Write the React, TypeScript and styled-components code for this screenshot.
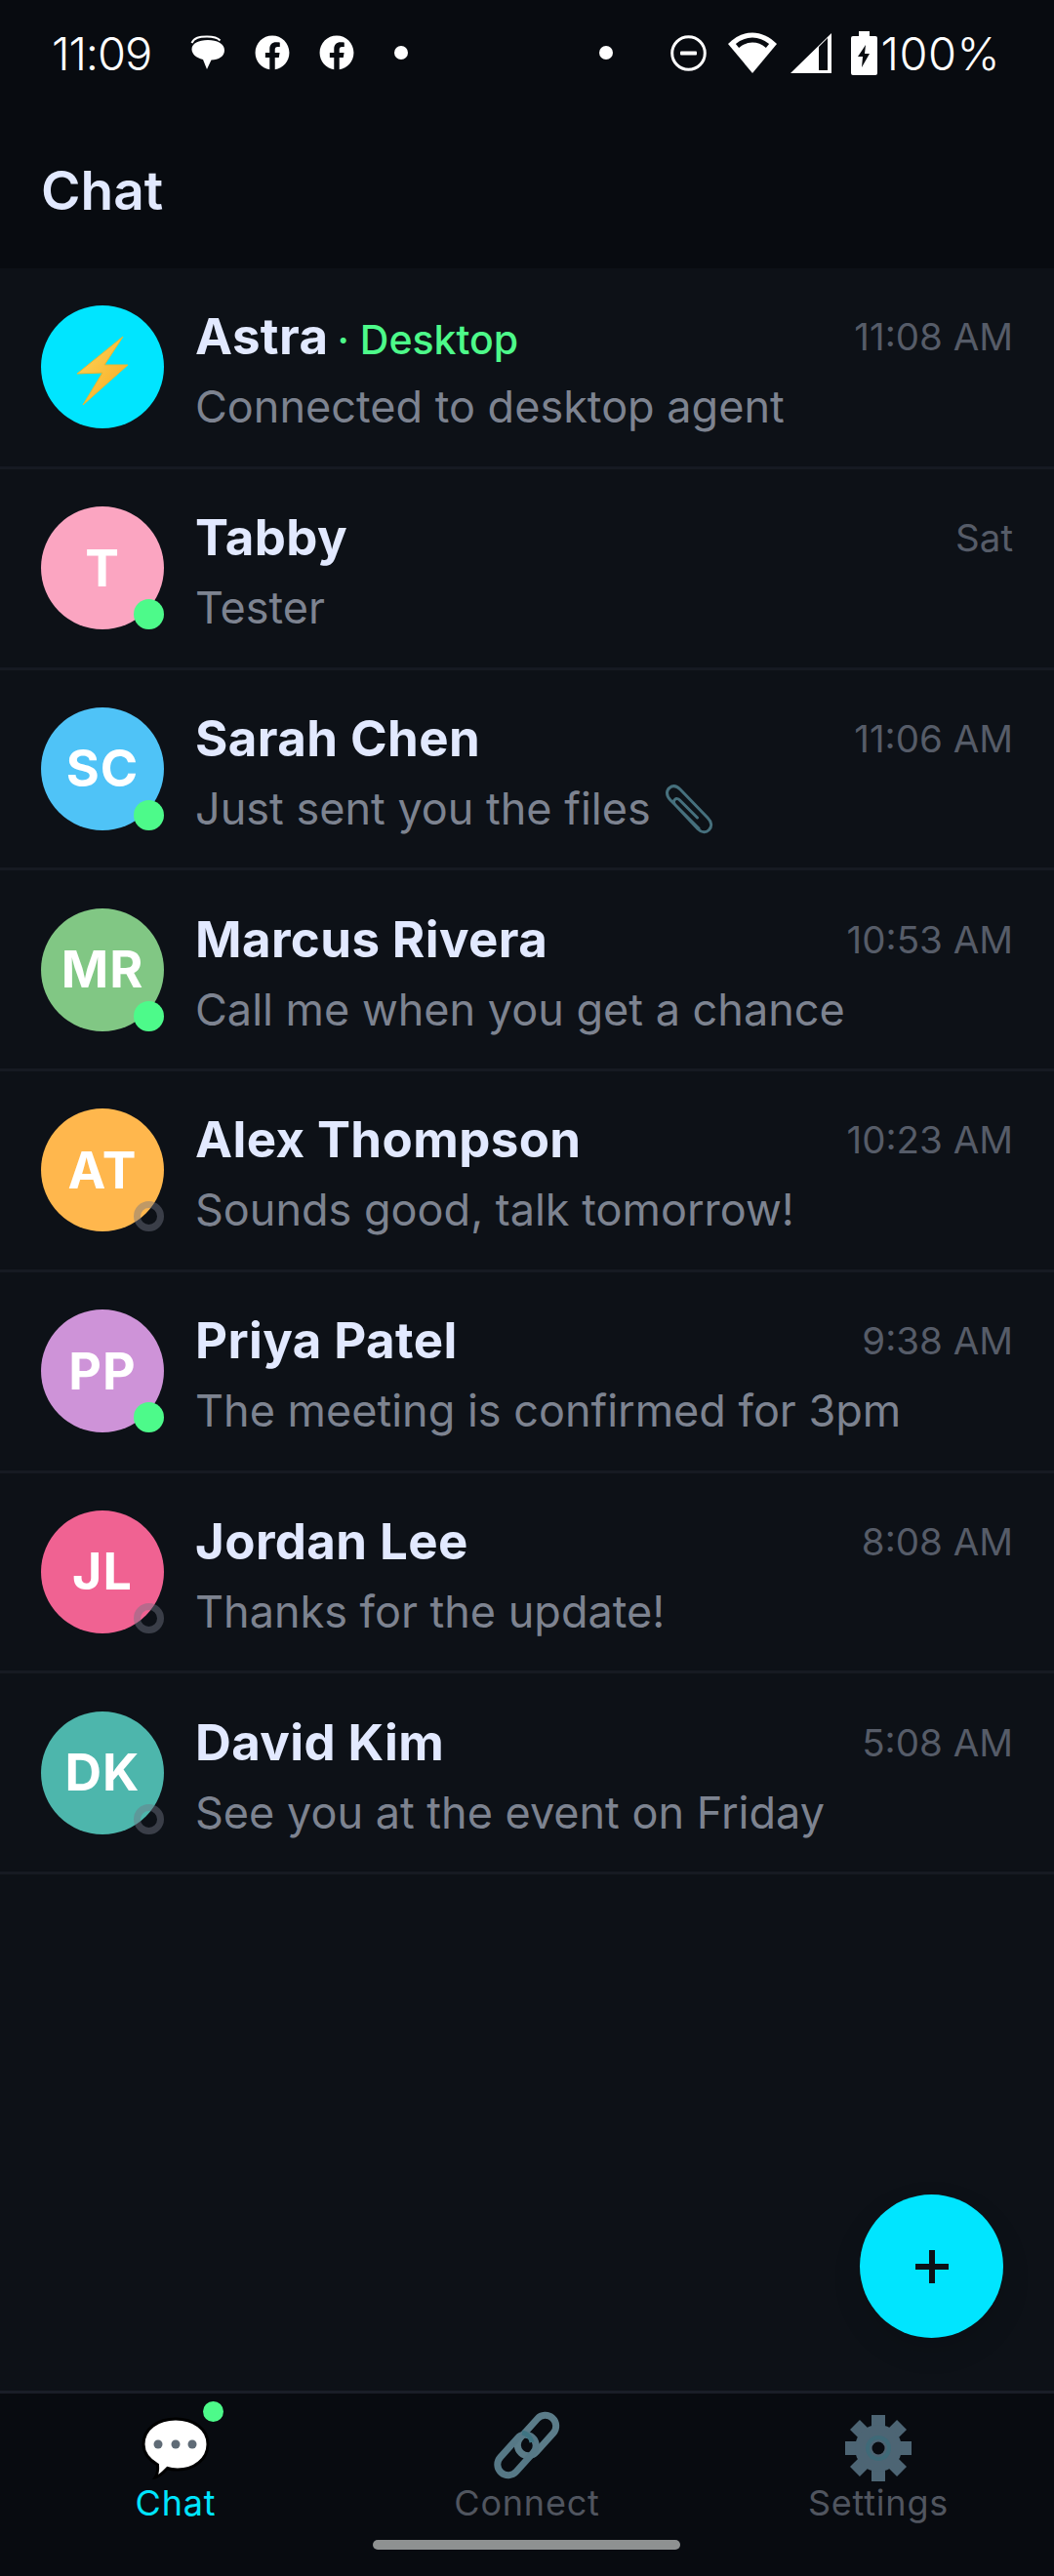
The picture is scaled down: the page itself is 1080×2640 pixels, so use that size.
import React from 'react';
import styled, { createGlobalStyle } from 'styled-components';
import { FaFacebook } from 'react-icons/fa';

const GlobalStyle = createGlobalStyle`
  html, body {
    margin: 0;
    padding: 0;
    background: #080b10;
  }
  * {
    box-sizing: border-box;
  }
`;

const fontStack = `Inter, 'Noto Sans', 'Liberation Sans', sans-serif`;

const Screen = styled.div`
  position: relative;
  width: 1080px;
  height: 2640px;
  display: flex;
  flex-direction: column;
  background: #0d1117;
  font-family: ${fontStack};
  overflow: hidden;
`;

const Top = styled.header`
  height: 275px;
  flex: none;
  background: #080b10;
  display: flex;
  flex-direction: column;
`;

const StatusBar = styled.div`
  height: 108px;
  padding: 0 55px 0 53px;
  display: flex;
  align-items: center;
  justify-content: space-between;
  color: #fff;
`;

const StatusGroup = styled.div`
  display: flex;
  align-items: center;
`;

const StatusText = styled.span<{ $spacing: number }>`
  font-size: 47px;
  font-weight: 300;
  letter-spacing: ${(p) => p.$spacing}px;
  line-height: 1;
`;

const StatusSlot = styled.span<{ $ml: number }>`
  display: flex;
  margin-left: ${(p) => p.$ml}px;
  color: #fff;
`;

const StatusDot = styled.span<{ $ml: number }>`
  width: 14px;
  height: 14px;
  border-radius: 50%;
  background: #fff;
  margin-left: ${(p) => p.$ml}px;
`;

const Title = styled.h1`
  margin: 0;
  padding: 56px 0 0 42px;
  font-size: 55px;
  line-height: 62px;
  font-weight: 600;
  color: #e2e9ff;
`;

const List = styled.main`
  flex: 1;
`;

const Row = styled.div`
  height: 205.75px;
  padding: 0 42px;
  display: flex;
  align-items: center;
  gap: 32px;
  border-bottom: 3px solid #161a22;
`;

const Avatar = styled.div<{ $color: string }>`
  position: relative;
  width: 126px;
  height: 126px;
  flex: none;
  border-radius: 50%;
  background: ${(p) => p.$color};
  color: #fff;
  display: flex;
  align-items: center;
  justify-content: center;
  font-size: 52px;
  font-weight: 700;
  letter-spacing: 1px;
`;

const Presence = styled.span<{ $online: boolean }>`
  position: absolute;
  right: 0;
  bottom: 0;
  width: 31px;
  height: 31px;
  border-radius: 50%;
  background: ${(p) => (p.$online ? '#4dfa8a' : 'transparent')};
  border: ${(p) => (p.$online ? 'none' : '7px solid rgba(112, 118, 134, 0.45)')};
`;

const RowBody = styled.div`
  flex: 1;
  min-width: 0;
  display: flex;
  flex-direction: column;
  gap: 10px;
  margin-top: 10px;
`;

const RowTop = styled.div`
  display: flex;
  justify-content: space-between;
  align-items: flex-start;
`;

const NameGroup = styled.div`
  display: flex;
  align-items: baseline;
`;

const Name = styled.span`
  font-size: 51px;
  line-height: 62px;
  font-weight: 700;
  letter-spacing: 0.4px;
  color: #e2e9ff;
`;

const Agent = styled.span`
  margin-left: 9px;
  font-size: 41px;
  font-weight: 500;
  color: #4dfa8a;
`;

const Time = styled.span`
  font-size: 38.5px;
  line-height: 62px;
  font-weight: 400;
  color: #565c68;
`;

const Preview = styled.div`
  font-size: 45px;
  line-height: 62px;
  font-weight: 400;
  color: #7d8390;
  white-space: nowrap;
`;

const ClipIcon = styled.svg`
  vertical-align: -12px;
  margin-left: 12px;
`;

const Fab = styled.button`
  position: absolute;
  left: 881px;
  top: 2249px;
  width: 147px;
  height: 147px;
  padding: 0;
  border: none;
  border-radius: 50%;
  background: #00e5ff;
  box-shadow: 0 12px 30px rgba(0, 0, 0, 0.12);
  display: flex;
  align-items: center;
  justify-content: center;
  color: #0d1117;
`;

const Nav = styled.nav`
  height: 190px;
  flex: none;
  background: #080b10;
  border-top: 3px solid #1a1e28;
  display: grid;
  grid-template-columns: repeat(3, 1fr);
`;

const NavItem = styled.div<{ $active?: boolean }>`
  position: relative;
  display: flex;
  flex-direction: column;
  align-items: center;
  padding-top: 23px;
  color: ${(p) => (p.$active ? '#00e5ff' : '#50555f')};
  font-size: 36px;
  letter-spacing: 0.8px;
  line-height: 44px;
`;

const NavIcon = styled.svg`
  display: block;
  margin-bottom: 1px;
  overflow: visible;
`;

const NavBadge = styled.span`
  position: absolute;
  left: 208px;
  top: 8px;
  width: 21px;
  height: 21px;
  border-radius: 50%;
  background: #4dfa8a;
`;

const HomeBar = styled.div`
  position: absolute;
  left: 382px;
  bottom: 27px;
  width: 315px;
  height: 10px;
  border-radius: 5px;
  background: #8e9191;
`;

const BubbleGlyph = () => (
  <svg width="36" height="36" viewBox="0 0 36 36" fill="none">
    <path d="M1.5 8C4 2.500 9 1.500 17 1.500s11 1 13.500 4" stroke="#fff" strokeWidth="2" />
    <path
      d="M18 5c9.500 0 17 3.600 17 10.500 0 6.500-6 9.800-13.500 10L17 35l-4-10C6 23.500 1.500 19 1.500 14.500 1.500 8.500 8.500 5 18 5z"
      fill="#fff"
    />
  </svg>
);

const DndGlyph = () => (
  <svg width="37" height="37" viewBox="0 0 37 37" fill="none">
    <circle cx="18.5" cy="18.500" r="16.800" stroke="#fff" strokeWidth="3" />
    <rect x="10" y="16.500" width="17" height="4" rx="1" fill="#fff" />
  </svg>
);

const WifiGlyph = () => (
  <svg width="50" height="43" viewBox="0 0 50 43" fill="none">
    <path d="M25 42L0 12C15-3.500 35-3.500 50 12z" fill="#fff" />
    <path d="M9.500 14C19 6 31 6 40.500 14" stroke="#080b10" strokeWidth="5" />
  </svg>
);

const SignalGlyph = () => (
  <svg width="42" height="41" viewBox="0 0 42 41">
    <path fillRule="evenodd" d="M0 41L42 0v41zM29 14v24h9V5z" fill="#fff" />
  </svg>
);

const BatteryGlyph = () => (
  <svg width="27" height="45" viewBox="0 0 27 45">
    <path
      fillRule="evenodd"
      d="M8 0h11v5h6a2 2 0 0 1 2 2v36a2 2 0 0 1-2 2H2a2 2 0 0 1-2-2V7a2 2 0 0 1 2-2h6zM15 14L7 26h5l-1 11 8-14h-5z"
      fill="#fff"
    />
  </svg>
);

const BoltGlyph = () => (
  <svg width="54" height="72" viewBox="0 0 54 72" style={{ marginTop: 7 }}>
    <defs>
      <linearGradient id="bolt" x1="0" y1="0" x2="1" y2="1">
        <stop offset="0" stopColor="#ffd75e" />
        <stop offset="1" stopColor="#f7a81c" />
      </linearGradient>
    </defs>
    <path d="M48 1L1 39l26-1L7 71 53 30l-24 0z" fill="url(#bolt)" stroke="#f2b52a" strokeWidth="1" strokeLinejoin="round" />
  </svg>
);

const PaperClip = () => (
  <ClipIcon width="54" height="54" viewBox="0 0 54 54" fill="none">
    <path
      d="M37 46L8 17c-5-5-4-10-1-12.500 3-2.500 7-2.500 11 1.500l28 29c4 4 5 9 1.500 12.500-3.500 3.500-8 2.500-11.500-1L13 22c-2-2-2-4.500-.5-5.500 1.500-1.500 3.500-1 5 .5l18 18"
      stroke="#46707d"
      strokeWidth="3"
      strokeLinecap="round"
      strokeLinejoin="round"
    />
  </ClipIcon>
);

const ChatIcon = () => (
  <NavIcon width="72" height="66" viewBox="0 0 72 66">
    <path
      d="M36 3c18 0 33 10 33 26 0 15-14 26-31 26-4 0-8-.5-10.500-1.500C24 57 20 62 15 63c2-3 3-8 2.500-13C9 45 3 38 3 29 3 13 18 3 36 3z"
      fill="#fff"
      stroke="#000"
      strokeWidth="3"
    />
    <circle cx="18" cy="29" r="4.500" fill="#5f6b76" />
    <circle cx="36" cy="29" r="4.500" fill="#5f6b76" />
    <circle cx="53" cy="29" r="4.500" fill="#5f6b76" />
  </NavIcon>
);

const LinkIcon = () => (
  <NavIcon width="72" height="66" viewBox="0 0 72 66" fill="none">
    <rect x="-11" y="-24" width="22" height="48" rx="11" transform="translate(46 20) rotate(42)" stroke="#5b7c89" strokeWidth="7" />
    <rect x="-11" y="-24" width="22" height="48" rx="11" transform="translate(25.500 40) rotate(42)" stroke="#567886" strokeWidth="7" />
    <path d="M31 17c5 1 9 5 10 10" stroke="#3f7482" strokeWidth="5" />
  </NavIcon>
);

const gearTeeth = [0, 45, 90, 135, 180, 225, 270, 315];

const GearIcon = () => (
  <NavIcon width="72" height="66" viewBox="0 0 72 66">
    {gearTeeth.map((angle) => (
      <rect key={angle} x="29" y="-1" width="14" height="16" transform={`rotate(${angle} 36 33)`} fill="#4d6574" />
    ))}
    <circle cx="36" cy="33" r="24" fill="#4d6574" />
    <circle cx="36" cy="33" r="11" fill="none" stroke="#3f6a78" strokeWidth="4" />
    <circle cx="36" cy="33" r="6.500" fill="#080b10" />
  </NavIcon>
);

const chats = [
  { initials: 'T', color: '#fba5c1', name: 'Tabby', time: 'Sat', text: 'Tester', online: true },
  { initials: 'SC', color: '#4fc3f7', name: 'Sarah Chen', time: '11:06 AM', text: 'Just sent you the files', online: true, clip: true },
  { initials: 'MR', color: '#81c784', name: 'Marcus Rivera', time: '10:53 AM', text: 'Call me when you get a chance', online: true },
  { initials: 'AT', color: '#ffb74d', name: 'Alex Thompson', time: '10:23 AM', text: 'Sounds good, talk tomorrow!', online: false },
  { initials: 'PP', color: '#ce93d8', name: 'Priya Patel', time: '9:38 AM', text: 'The meeting is confirmed for 3pm', online: true },
  { initials: 'JL', color: '#f06292', name: 'Jordan Lee', time: '8:08 AM', text: 'Thanks for the update!', online: false },
  { initials: 'DK', color: '#4db6ac', name: 'David Kim', time: '5:08 AM', text: 'See you at the event on Friday', online: false },
];

export default function App() {
  return (
    <Screen>
      <GlobalStyle />
      <Top>
        <StatusBar>
          <StatusGroup>
            <StatusText $spacing={-1.1}>11:09</StatusText>
            <StatusSlot $ml={40}>
              <BubbleGlyph />
            </StatusSlot>
            <StatusSlot $ml={30}>
              <FaFacebook size={36} />
            </StatusSlot>
            <StatusSlot $ml={30}>
              <FaFacebook size={36} />
            </StatusSlot>
            <StatusDot $ml={41} />
          </StatusGroup>
          <StatusGroup>
            <StatusDot $ml={0} />
            <StatusSlot $ml={59}>
              <DndGlyph />
            </StatusSlot>
            <StatusSlot $ml={22}>
              <WifiGlyph />
            </StatusSlot>
            <StatusSlot $ml={14}>
              <SignalGlyph />
            </StatusSlot>
            <StatusSlot $ml={20}>
              <BatteryGlyph />
            </StatusSlot>
            <StatusSlot $ml={3}>
              <StatusText $spacing={0.5}>100%</StatusText>
            </StatusSlot>
          </StatusGroup>
        </StatusBar>
        <Title>Chat</Title>
      </Top>
      <List>
        <Row>
          <Avatar $color="#00e5ff">
            <BoltGlyph />
          </Avatar>
          <RowBody>
            <RowTop>
              <NameGroup>
                <Name>Astra</Name>
                <Agent>· Desktop</Agent>
              </NameGroup>
              <Time>11:08 AM</Time>
            </RowTop>
            <Preview>Connected to desktop agent</Preview>
          </RowBody>
        </Row>
        {chats.map((chat) => (
          <Row key={chat.name}>
            <Avatar $color={chat.color}>
              {chat.initials}
              <Presence $online={chat.online} />
            </Avatar>
            <RowBody>
              <RowTop>
                <Name>{chat.name}</Name>
                <Time>{chat.time}</Time>
              </RowTop>
              <Preview>
                {chat.text}
                {chat.clip && <PaperClip />}
              </Preview>
            </RowBody>
          </Row>
        ))}
      </List>
      <Fab aria-label="New chat">
        <svg width="34" height="34" viewBox="0 0 34 34">
          <path d="M14 0h6v14h14v6H20v14h-6V20H0v-6h14z" fill="currentColor" />
        </svg>
      </Fab>
      <Nav>
        <NavItem $active>
          <ChatIcon />
          Chat
          <NavBadge />
        </NavItem>
        <NavItem>
          <LinkIcon />
          Connect
        </NavItem>
        <NavItem>
          <GearIcon />
          Settings
        </NavItem>
      </Nav>
      <HomeBar />
    </Screen>
  );
}
